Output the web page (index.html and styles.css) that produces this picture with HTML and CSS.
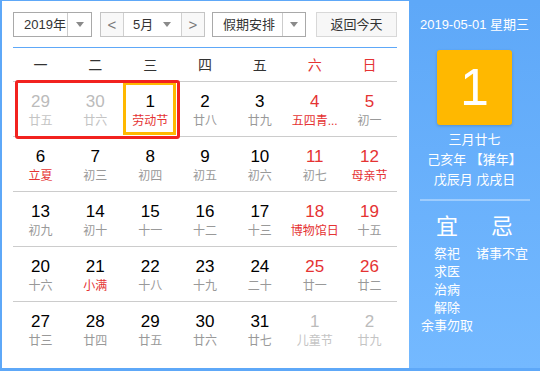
FILE: index.html
```html
<!DOCTYPE html>
<html lang="zh-CN">
<head>
<meta charset="utf-8">
<title>万年历</title>
<link rel="stylesheet" href="styles.css">
</head>
<body>
<div class="cal">
  <div class="main">
    <div class="toolbar">
      <div class="sel sel-year"><span class="sel-text">2019年</span><span class="sel-arrow"><i class="tri"></i></span></div>
      <div class="sel sel-month">
        <span class="nav">&lt;</span>
        <span class="sel-text">5月</span><span class="month-arrow"><i class="tri"></i></span>
        <span class="nav nav-r">&gt;</span>
      </div>
      <div class="sel sel-holiday"><span class="sel-text">假期安排</span><span class="sel-arrow"><i class="tri"></i></span></div>
      <div class="btn-today">返回今天</div>
    </div>
    <div class="weekdays">
      <span>一</span><span>二</span><span>三</span><span>四</span><span>五</span><span class="we">六</span><span class="we">日</span>
    </div>
    <div class="weeks">
      <div class="week first">
        <div class="day other"><b>29</b><small>廿五</small></div>
        <div class="day other"><b>30</b><small>廿六</small></div>
        <div class="day selected"><b>1</b><small class="hol">劳动节</small></div>
        <div class="day"><b>2</b><small>廿八</small></div>
        <div class="day"><b>3</b><small>廿九</small></div>
        <div class="day we"><b>4</b><small class="hol">五四青...</small></div>
        <div class="day we"><b>5</b><small>初一</small></div>
        <div class="range"></div>
      </div>
      <div class="week">
        <div class="day"><b>6</b><small class="hol">立夏</small></div>
        <div class="day"><b>7</b><small>初三</small></div>
        <div class="day"><b>8</b><small>初四</small></div>
        <div class="day"><b>9</b><small>初五</small></div>
        <div class="day"><b>10</b><small>初六</small></div>
        <div class="day we"><b>11</b><small>初七</small></div>
        <div class="day we"><b>12</b><small class="hol">母亲节</small></div>
      </div>
      <div class="week">
        <div class="day"><b>13</b><small>初九</small></div>
        <div class="day"><b>14</b><small>初十</small></div>
        <div class="day"><b>15</b><small>十一</small></div>
        <div class="day"><b>16</b><small>十二</small></div>
        <div class="day"><b>17</b><small>十三</small></div>
        <div class="day we"><b>18</b><small class="hol">博物馆日</small></div>
        <div class="day we"><b>19</b><small>十五</small></div>
      </div>
      <div class="week">
        <div class="day"><b>20</b><small>十六</small></div>
        <div class="day"><b>21</b><small class="hol">小满</small></div>
        <div class="day"><b>22</b><small>十八</small></div>
        <div class="day"><b>23</b><small>十九</small></div>
        <div class="day"><b>24</b><small>二十</small></div>
        <div class="day we"><b>25</b><small>廿一</small></div>
        <div class="day we"><b>26</b><small>廿二</small></div>
      </div>
      <div class="week">
        <div class="day"><b>27</b><small>廿三</small></div>
        <div class="day"><b>28</b><small>廿四</small></div>
        <div class="day"><b>29</b><small>廿五</small></div>
        <div class="day"><b>30</b><small>廿六</small></div>
        <div class="day"><b>31</b><small>廿七</small></div>
        <div class="day other"><b>1</b><small>儿童节</small></div>
        <div class="day other"><b>2</b><small>廿九</small></div>
      </div>
    </div>
  </div>
  <div class="side">
    <div class="side-date">2019-05-01 星期三</div>
    <div class="side-day">1</div>
    <div class="side-lunar">
      <div>三月廿七</div>
      <div>己亥年 【猪年】</div>
      <div>戊辰月 戊戌日</div>
    </div>
    <div class="side-line"></div>
    <div class="yiji">
      <div class="yiji-col">
        <div class="yiji-title">宜</div>
        <div class="yiji-list">
          <div>祭祀</div><div>求医</div><div>治病</div><div>解除</div><div>余事勿取</div>
        </div>
      </div>
      <div class="yiji-col">
        <div class="yiji-title">忌</div>
        <div class="yiji-list">
          <div>诸事不宜</div>
        </div>
      </div>
    </div>
  </div>
</div>
</body>
</html>
```

FILE: styles.css
```css
html, body {
  margin: 0;
  padding: 0;
  background: #fff;
}
body {
  font-family: "Liberation Sans", "Noto Sans CJK SC", sans-serif;
  color: #333;
}
.cal {
  box-sizing: border-box;
  width: 540px;
  height: 371px;
  display: flex;
  border-top: 1px solid #5ea8f8;
  border-left: 2px solid #5ea8f8;
  border-bottom: 3px solid #5ea8f8;
  overflow: hidden;
}
.main {
  width: 407px;
  box-sizing: border-box;
  padding: 11px 12px 0 11px;
  background: #fff;
}
.toolbar {
  display: flex;
  height: 36px;
  box-sizing: border-box;
  border-bottom: 1px solid #5ea8f8;
  align-items: flex-start;
}
.sel {
  box-sizing: border-box;
  height: 25px;
  display: flex;
  align-items: stretch;
  border: 1px solid #a9a9a9;
  font-size: 13px;
  line-height: 23px;
  background: #fff;
}
.sel-text {
  display: block;
  padding-left: 10px;
}
.sel-arrow {
  display: flex;
  align-items: center;
  justify-content: center;
  border-left: 1px solid #ccc;
  margin-left: auto;
}
.tri {
  display: block;
  width: 0;
  height: 0;
  border-top: 5px solid #8a8a8a;
  border-left: 4px solid transparent;
  border-right: 4px solid transparent;
}
.sel-year {
  width: 79px;
}
.sel-year .sel-arrow {
  width: 23px;
}
.sel-month {
  width: 105px;
  margin-left: 8px;
  border-color: #c4c4c4;
}
.nav {
  display: block;
  width: 22px;
  text-align: center;
  color: #777;
  background: #f8f8f8;
  border-right: 1px solid #d0d0d0;
  font-size: 15px;
}
.nav-r {
  border-right: 0;
  border-left: 1px solid #d0d0d0;
}
.sel-month .sel-text {
  padding-left: 9px;
}
.month-arrow {
  display: flex;
  align-items: center;
  margin-left: auto;
  padding-right: 10px;
}
.sel-holiday {
  width: 94px;
  margin-left: 7px;
}
.sel-holiday .sel-arrow {
  width: 22px;
}
.btn-today {
  box-sizing: border-box;
  height: 25px;
  width: 81px;
  margin-left: auto;
  border: 1px solid #d8d8d8;
  background: #f7f7f7;
  font-size: 13px;
  line-height: 23px;
  text-align: center;
}
.weekdays {
  display: grid;
  grid-template-columns: repeat(7, 1fr);
  height: 33px;
  align-items: center;
  text-align: center;
  font-size: 14px;
  line-height: 18px;
  padding-top: 1px;
  box-sizing: border-box;
}
.weekdays .we {
  color: #e53333;
}
.week {
  position: relative;
  display: grid;
  grid-template-columns: repeat(7, 1fr);
  height: 55px;
  box-sizing: border-box;
  border-top: 1px solid #cccccc;
}
.week.first {
  z-index: 2;
}
.day {
  position: relative;
  text-align: center;
  padding-top: 10px;
}
.day b {
  display: block;
  font-weight: normal;
  font-size: 17px;
  line-height: 20px;
  color: #000;
}
.day small {
  display: block;
  font-size: 12px;
  line-height: 18px;
  color: #999;
  white-space: nowrap;
}
.day.we b {
  color: #e53333;
}
.day small.hol {
  color: #e53333;
}
.day.other b {
  color: #bbb;
}
.day.other small {
  color: #c4c4c4;
}
.day.selected::after {
  content: "";
  position: absolute;
  left: 0;
  top: 0;
  right: 2px;
  bottom: 1px;
  border: 3px solid #ffb800;
}
.range {
  position: absolute;
  z-index: 3;
  left: 2px;
  top: -2px;
  width: 165px;
  height: 59px;
  box-sizing: border-box;
  border: 3px solid #f2221f;
  border-radius: 3px;
  pointer-events: none;
}
.side {
  flex: 1;
  background: linear-gradient(#5ea8f8, #74b9ff);
  color: #fff;
  display: flex;
  flex-direction: column;
  align-items: center;
  padding: 0 10px;
}
.side-date {
  margin-top: 15px;
  font-size: 13px;
  line-height: 18px;
  white-space: nowrap;
}
.side-day {
  margin-top: 16px;
  width: 75px;
  height: 75px;
  background: #ffb800;
  border-radius: 3px;
  box-shadow: 0 1px 3px rgba(0, 0, 0, 0.18);
  font-size: 52px;
  line-height: 75px;
  text-align: center;
  color: #fff;
}
.side-lunar {
  margin-top: 5px;
  font-size: 13px;
  line-height: 20px;
  text-align: center;
  white-space: nowrap;
}
.side-line {
  margin-top: 9px;
  width: 110px;
  height: 2px;
  background: rgba(255, 255, 255, 0.35);
  flex: none;
}
.yiji {
  margin-top: 13px;
  width: 110px;
  display: grid;
  grid-template-columns: 1fr 1fr;
}
.yiji-col {
  display: flex;
  flex-direction: column;
  align-items: center;
}
.yiji-title {
  font-size: 22px;
  line-height: 26px;
}
.yiji-list {
  margin-top: 5px;
  font-size: 13px;
  line-height: 18px;
  text-align: center;
  white-space: nowrap;
}
```
